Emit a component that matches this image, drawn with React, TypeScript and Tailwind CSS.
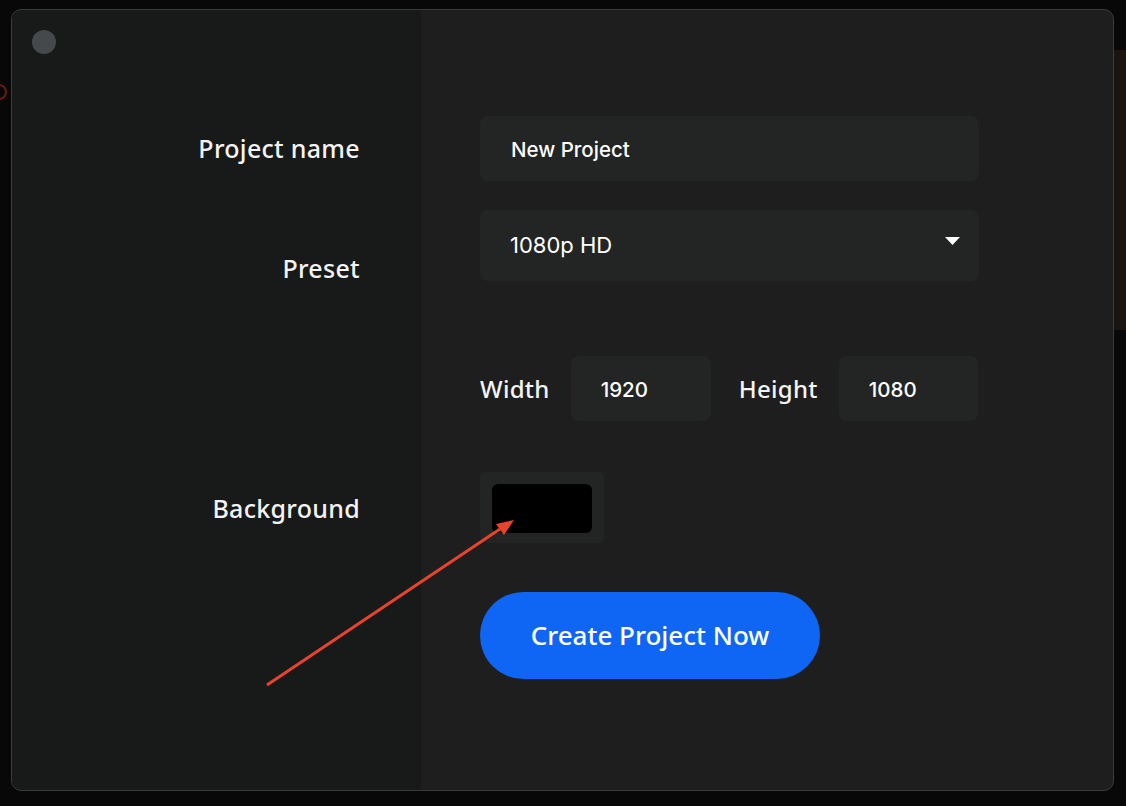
import React from "react";

const labelFont = { fontFamily: "'Noto Sans', 'Open Sans', sans-serif" };
const inputFont = { fontFamily: "Inter, sans-serif" };

export default function App() {
  return (
    <div className="relative h-[806px] w-[1126px] overflow-hidden bg-[#080808]">
      <div className="absolute left-0 top-[50px] h-[280px] w-[1126px] bg-gradient-to-r from-[#080808] via-[#0d0b09] to-[#1a1510]" />
      <div className="absolute left-[-9px] top-[84px] h-[16px] w-[16px] rounded-full border-[2px] border-[#6a1a12]" />
      <div className="relative pl-[11px] pt-[9px]">
        <div
          className="relative flex h-[782px] w-[1103px] overflow-hidden rounded-[10px] border border-[#3a3b3b] bg-[#1e1e1e]"
          style={labelFont}
        >
          {/* Left panel */}
          <div className="flex w-[409px] flex-col bg-[#181919] pl-[20px] pt-[20px]">
            <div className="h-[24px] w-[24px] rounded-full bg-[#45494b]" />
            <div className="mt-[79px] flex w-[328px] flex-col items-end text-[25px] font-medium leading-[30px] tracking-[0.3px] text-[#f4f4f4]">
              <div>Project name</div>
              <div className="mt-[90px]">Preset</div>
              <div className="mt-[210px]">Background</div>
            </div>
          </div>
          {/* Right panel */}
          <div className="flex flex-1 flex-col items-start pl-[59px] pt-[106px]">
            <div
              className="flex h-[65px] w-[499px] items-center rounded-[8px] bg-[#232525] pl-[31px] pt-[4px] text-[20.5px] font-medium text-white"
              style={inputFont}
            >
              New Project
            </div>
            <div
              className="mt-[29px] flex h-[71px] w-[499px] items-start justify-between rounded-[8px] bg-[#232525] pl-[30px] pr-[19px] pt-[19px] text-[22px] text-white"
              style={inputFont}
            >
              <span>1080p HD</span>
              <svg width="15" height="8" viewBox="0 0 15 8" className="mt-[8px]">
                <path d="M0 0 H15 L7.5 8 Z" fill="#ffffff" />
              </svg>
            </div>
            <div className="mt-[75px] flex h-[65px] items-center text-[24px] font-medium tracking-[0.3px] text-[#f4f4f4]">
              <span>Width</span>
              <div
                className="ml-[21px] flex h-[65px] w-[140px] items-center rounded-[8px] bg-[#232525] pl-[30px] pt-[3px] text-[20.5px] tracking-normal text-white"
                style={inputFont}
              >
                1920
              </div>
              <span className="ml-[28px]">Height</span>
              <div
                className="ml-[21px] flex h-[65px] w-[139px] items-center rounded-[8px] bg-[#232525] pl-[30px] pt-[3px] text-[20.5px] tracking-normal text-white"
                style={inputFont}
              >
                1080
              </div>
            </div>
            <div className="mt-[51px] flex h-[71px] w-[124px] items-start rounded-[6px] bg-[#232525] pl-[12px] pt-[12px]">
              <div className="h-[49px] w-[100px] rounded-[6px] bg-black" />
            </div>
            <button className="mt-[49px] flex h-[87px] w-[340px] items-center justify-center rounded-full bg-[#0f66f5] text-[26px] font-medium text-white">
              Create Project Now
            </button>
          </div>
        </div>
      </div>
      {/* annotation arrow */}
      <svg className="pointer-events-none absolute left-0 top-0" width="1126" height="806" viewBox="0 0 1126 806">
        <line x1="267" y1="685" x2="500" y2="529" stroke="#e8432c" strokeWidth="3" />
        <path d="M514 520 L496 524 L504 535 Z" fill="#e8432c" />
      </svg>
    </div>
  );
}
